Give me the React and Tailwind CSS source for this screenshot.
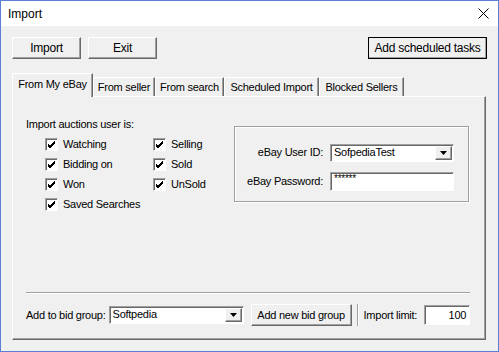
import React from "react";

const raised =
  "border border-t-white border-l-white border-r-[#696969] border-b-[#696969] shadow-[inset_-1px_-1px_0_#a0a0a0]";
const sunken =
  "border border-t-[#a0a0a0] border-l-[#a0a0a0] border-r-white border-b-white shadow-[inset_1px_1px_0_#696969]";

const Button = ({ children, className = "" }) => (
  <button
    className={`bg-[#f0f0f0] ${raised} flex items-center justify-center h-[22px] whitespace-nowrap shrink-0 ${className}`}
  >
    {children}
  </button>
);

const Check = ({ label }) => (
  <label className="flex items-center gap-[5px] h-[20px]">
    <span className={`w-[13px] h-[13px] bg-white ${sunken} flex items-center justify-center`}>
      <svg width="9" height="9" viewBox="0 0 9 9">
        <path d="M1 4 L3 6 L8 1 M1 5 L3 7 L8 2 M1 6 L3 8 L8 3" stroke="#000" strokeWidth="1" fill="none" />
      </svg>
    </span>
    <span>{label}</span>
  </label>
);

const Combo = ({ value, className = "" }) => (
  <div className={`bg-white ${sunken} flex items-stretch shrink-0 ${className}`}>
    <span className="flex-1 px-[3px] leading-[15px]">{value}</span>
    <span className={`w-[17px] bg-[#f0f0f0] ${raised} flex items-center justify-center m-px`}>
      <svg width="7" height="4" viewBox="0 0 7 4">
        <path d="M0 0 H7 L3.5 4 Z" fill="#000" />
      </svg>
    </span>
  </div>
);

const Tab = ({ label, active, w }) =>
  active ? (
    <div
      className={`${w} h-[24px] pt-[2px] text-center bg-[#f0f0f0] border-t border-l border-white border-r border-r-[#696969] shadow-[inset_-1px_0_0_#a0a0a0] -mb-px z-10 relative`}
    >
      {label}
    </div>
  ) : (
    <div
      className={`${w} h-[19px] pt-px text-center border-t border-l border-white border-r border-r-[#696969] shadow-[inset_-1px_0_0_#a0a0a0]`}
    >
      {label}
    </div>
  );

export default function App() {
  return (
    <div
      className="w-[499px] h-[352px] border border-[#5b7fd4] bg-[#f0f0f0] flex flex-col text-[11px] tracking-[-0.25px] text-black whitespace-nowrap"
      style={{ fontFamily: '"Liberation Sans", Arial, sans-serif' }}
    >
      <div className="h-[25px] bg-white flex items-center justify-between pl-[7px] pr-[9px] text-[12px] tracking-normal">
        <span>Import</span>
        <svg width="11" height="11" viewBox="0 0 11 11">
          <path d="M0.5 0.5 L10.5 10.5 M10.5 0.5 L0.5 10.5" stroke="#000" strokeWidth="1" />
        </svg>
      </div>

      <div className="flex-1 flex flex-col px-[11px] pb-[11px]">
        <div className="flex items-center mt-[11px] gap-[7px]">
          <Button className="w-[69px] text-[12px]">Import</Button>
          <Button className="w-[69px] text-[12px]">Exit</Button>
          <Button className="w-[119px] ml-auto text-[12px] outline outline-1 outline-black -outline-offset-1">
            Add scheduled tasks
          </Button>
        </div>

        <div className="flex items-end mt-[14px]">
          <Tab label="From My eBay" active w="w-[81px]" />
          <Tab label="From seller" w="w-[62px]" />
          <Tab label="From search" w="w-[69px]" />
          <Tab label="Scheduled Import" w="w-[95px]" />
          <Tab label="Blocked Sellers" w="w-[85px]" />
        </div>

        <div className="flex-1 flex flex-col border-t border-l border-white border-r border-b border-r-[#696969] border-b-[#696969] shadow-[inset_-1px_-1px_0_#a0a0a0] px-[13px] pb-[13px] mr-[1px]">
          <div className="flex items-start mt-[21px]">
            <div className="flex flex-col w-[208px] shrink-0">
              <span className="leading-[13px]">Import auctions user is:</span>
              <div className="flex pl-[19px] mt-[3px]">
                <div className="flex flex-col w-[108px]">
                  <Check label="Watching" />
                  <Check label="Bidding on" />
                  <Check label="Won" />
                  <Check label="Saved Searches" />
                </div>
                <div className="flex flex-col">
                  <Check label="Selling" />
                  <Check label="Sold" />
                  <Check label="UnSold" />
                </div>
              </div>
            </div>
            <div className="mt-[8px] w-[235px] h-[76px] border border-[#a0a0a0] shadow-[1px_1px_0_#fff,inset_1px_1px_0_#fff] flex flex-col justify-center gap-[10px] pl-[4px] pt-[6px]">
              <div className="flex items-center gap-[7px]">
                <span className="w-[84px] text-right">eBay User ID:</span>
                <Combo value="SofpediaTest" className="w-[124px] h-[18px]" />
              </div>
              <div className="flex items-center gap-[7px]">
                <span className="w-[84px] text-right">eBay Password:</span>
                <div className={`w-[124px] h-[19px] bg-white ${sunken} px-[3px] leading-[12px] text-[10px]`}>
                  ******
                </div>
              </div>
            </div>
          </div>

          <div className="flex-1" />

          <div className="h-[2px] border-t border-[#a0a0a0] border-b border-b-white mr-[2px]" />

          <div className="flex items-center mt-[10px] h-[22px]">
            <span>Add to bid group:</span>
            <Combo value="Softpedia" className="w-[135px] h-[18px] ml-[3px]" />
            <Button className="w-[101px] ml-[7px]">Add new bid group</Button>
            <div className="w-[2px] h-[22px] border-l border-[#a0a0a0] border-r border-r-white ml-[5px] shrink-0" />
            <span className="ml-[5px]">Import limit:</span>
            <div className={`w-[46px] h-[20px] bg-white ${sunken} ml-[7px] flex items-center justify-end pr-[3px] shrink-0`}>
              100
            </div>
          </div>
        </div>
      </div>
    </div>
  );
}
